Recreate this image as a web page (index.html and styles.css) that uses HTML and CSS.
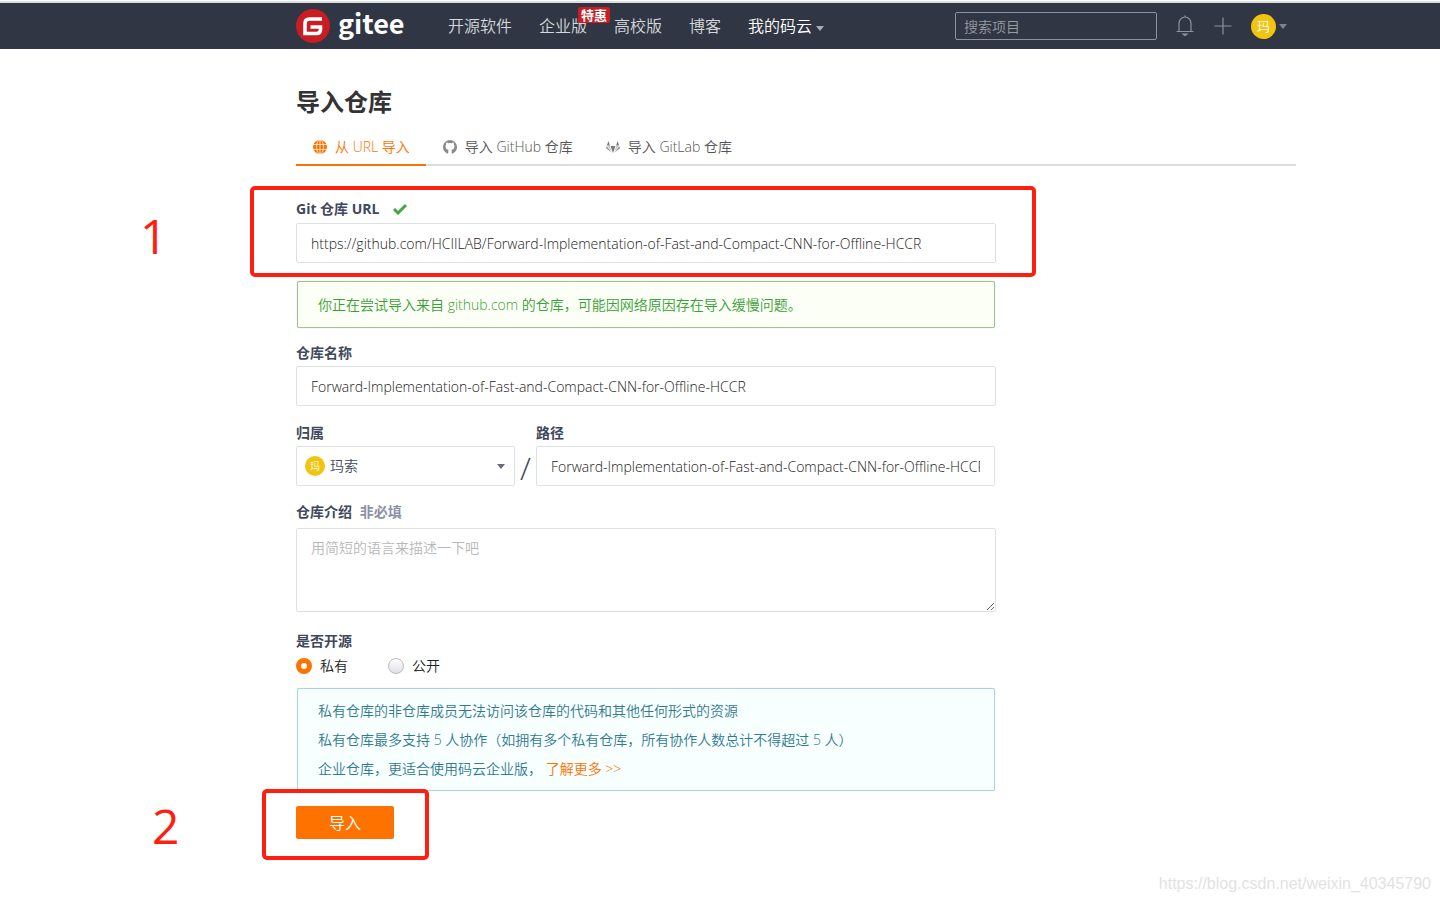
FILE: index.html
```html
<!DOCTYPE html>
<html lang="zh-CN">
<head>
    <meta charset="UTF-8">
    <meta name="viewport" content="width=device-width, initial-scale=1.0">
    <title>导入仓库 - 码云 Gitee</title>
    <link rel="stylesheet" href="styles.css">
</head>
<body>
    <header class="site-header">
        <a class="logo" href="#">
            <svg width="34" height="34" viewBox="0 0 34 34" aria-hidden="true">
                <circle cx="17" cy="17" r="17" fill="#c71d23"/>
                <path d="M26 10H13.500Q9 10 9 14.500V24.500H20.500Q24.500 24.500 24.500 20.500V18H14.500" fill="none" stroke="#fff" stroke-width="3.600"/>
            </svg>
            <span>gitee</span>
        </a>
        <nav class="main-nav">
            <a href="#">开源软件</a>
            <a href="#" class="has-badge">企业版<span class="badge">特惠</span></a>
            <a href="#">高校版</a>
            <a href="#">博客</a>
            <a href="#" class="active">我的码云<span class="caret"></span></a>
        </nav>
        <div class="header-tools">
            <input class="search" type="text" placeholder="搜索项目" aria-label="搜索项目">
            <button class="icon-button" type="button" aria-label="通知">
                <svg width="18" height="22" viewBox="0 0 18 22" fill="none" stroke="#8c92a4" stroke-width="1.2">
                    <path d="M.5 16.5h17M3 16.500V8.500a6 6.500 0 0 1 12 0v8M9 2V.5"/>
                    <path d="M7 19h4l-2 1.500z" fill="#8c92a4"/>
                </svg>
            </button>
            <button class="icon-button" type="button" aria-label="新建">
                <svg width="18" height="18" viewBox="0 0 18 18" stroke="#8c92a4" stroke-width="1.2">
                    <path d="M9 .5v17M.5 9h17"/>
                </svg>
            </button>
            <button class="user-menu" type="button">
                <span class="avatar">玛</span><span class="caret"></span>
            </button>
        </div>
    </header>

    <main class="page">
        <h1>导入仓库</h1>
        <nav class="tabs">
            <a href="#" class="active">
                <svg width="14" height="14" viewBox="0 0 14 14">
                    <circle cx="7" cy="7" r="7" fill="#fe7300"/>
                    <path d="M7 0v14M0 4.500h14M0 9.500h14" stroke="#fff" stroke-width=".7" fill="none"/>
                    <ellipse cx="7" cy="7" rx="3.500" ry="7" stroke="#fff" stroke-width=".7" fill="none"/>
                </svg>
                从 URL 导入
            </a>
            <a href="#">
                <svg width="14" height="14" viewBox="0 0 16 16" fill="#8a8a8a">
                    <path d="M8 0a8 8 0 0 0-2.500 15.600c.4.100.5-.2.500-.4v-2.700c0-.6.200-1 .5-1.300-1.800-.2-3.600-.9-3.600-4 0-.9.300-1.600.8-2.100-.1-.2-.4-1 .1-2.100 0 0 .7-.2 2.200.8a7.600 7.600 0 0 1 4 0c1.500-1 2.200-.8 2.200-.8.400 1.100.2 1.900.1 2.100.5.600.8 1.300.8 2.100 0 3.100-1.900 3.800-3.600 4 .3.300.5.800.5 1.500v2.500c0 .2.100.5.500.4A8 8 0 0 0 8 0z"/>
                </svg>
                导入 GitHub 仓库
            </a>
            <a href="#">
                <svg width="14" height="14" viewBox="0 0 14 14">
                    <path d="M2.400 1L.9 5.500h3zM11.600 1l-1.500 4.500h3z" fill="#777"/>
                    <path d="M4.600 6h4.800L7 13z" fill="#777"/>
                    <path d="M1.500 6h2l2.500 6zM12.500 6h-2L8 12z" fill="#c4c4c4"/>
                    <path d="M.8 6L0 8.300 5.500 12.500zM13.200 6l.8 2.300-5.500 4.200z" fill="#999"/>
                </svg>
                导入 GitLab 仓库
            </a>
        </nav>

        <form class="import-form">
            <div class="field marked">
                <label for="git-url">Git 仓库 URL
                    <svg class="check" width="14" height="12" viewBox="0 0 14 12">
                        <path d="M1 6l4 4L13 2" fill="none" stroke="#43a843" stroke-width="3"/>
                    </svg>
                </label>
                <input id="git-url" type="text" value="https://github.com/HCIILAB/Forward-Implementation-of-Fast-and-Compact-CNN-for-Offline-HCCR">
                <span class="step step-one">1</span>
                <span class="frame frame-url"></span>
            </div>

            <div class="message success">你正在尝试导入来自 github.com 的仓库，可能因网络原因存在导入缓慢问题。</div>

            <div class="field">
                <label for="name">仓库名称</label>
                <input id="name" type="text" value="Forward-Implementation-of-Fast-and-Compact-CNN-for-Offline-HCCR">
            </div>

            <div class="path-row">
                <div class="field">
                    <label for="owner">归属</label>
                    <div class="owner">
                        <select id="owner">
                            <option>玛索</option>
                        </select>
                        <span class="avatar">玛</span>
                        <span class="caret"></span>
                    </div>
                </div>
                <span class="slash">/</span>
                <div class="field">
                    <label for="path">路径</label>
                    <input id="path" type="text" value="Forward-Implementation-of-Fast-and-Compact-CNN-for-Offline-HCCR">
                </div>
            </div>

            <div class="field">
                <label for="description">仓库介绍 <span class="optional">非必填</span></label>
                <textarea id="description" placeholder="用简短的语言来描述一下吧"></textarea>
            </div>

            <fieldset>
                <legend>是否开源</legend>
                <div class="radios">
                    <label><input type="radio" name="public" checked>私有</label>
                    <label><input type="radio" name="public">公开</label>
                </div>
            </fieldset>

            <div class="message info">
                <p>私有仓库的非仓库成员无法访问该仓库的代码和其他任何形式的资源</p>
                <p>私有仓库最多支持 5 人协作（如拥有多个私有仓库，所有协作人数总计不得超过 5 人）</p>
                <p>企业仓库，更适合使用码云企业版， <a href="#">了解更多 &gt;&gt;</a></p>
            </div>

            <div class="actions marked">
                <button class="submit" type="submit">导入</button>
                <span class="step step-two">2</span>
                <span class="frame frame-submit"></span>
            </div>
        </form>
    </main>

    <div class="watermark">https://blog.csdn.net/weixin_40345790</div>
</body>
</html>
```
FILE: styles.css
```css
* {
    box-sizing: border-box;
    margin: 0;
    padding: 0;
}
body {
    font-family: "Open Sans", "Noto Sans CJK SC", sans-serif;
    font-size: 14px;
    font-weight: 350;
    line-height: 20px;
    color: #40485b;
    background-color: #fff;
    padding-top: 1px;
    position: relative;
    min-height: 100vh;
}
input, textarea, select, button {
    font: inherit;
    color: inherit;
}
a {
    text-decoration: none;
    color: inherit;
}
button {
    border: none;
    background: none;
    cursor: pointer;
}
.caret {
    display: inline-block;
    border: 4px solid transparent;
    border-top: 5px solid currentColor;
    border-bottom: none;
}
.avatar {
    display: flex;
    align-items: center;
    justify-content: center;
    border-radius: 50%;
    background-color: #f1c40f;
    color: #fff;
}

/* header */
.site-header {
    display: flex;
    align-items: center;
    height: 48px;
    padding: 0 153px 0 296px;
    border-top: 2px solid #d9dee0;
    background-color: #303643;
    color: #d5d7db;
    font-size: 16px;
}
.logo {
    display: flex;
    align-items: center;
    gap: 8px;
    width: 152px;
    color: #fff;
    font-family: "Noto Sans CJK SC", sans-serif;
    font-size: 27px;
    font-weight: bold;
}
.logo span {
    padding-bottom: 6px;
}
.main-nav {
    display: flex;
    gap: 27px;
    white-space: nowrap;
}
.main-nav .active {
    color: #fff;
}
.main-nav .caret {
    margin-left: 4px;
    vertical-align: 1px;
    color: #a9acb3;
}
.has-badge {
    position: relative;
}
.badge {
    position: absolute;
    left: 39px;
    top: -9px;
    padding: 0 3px;
    border-radius: 2px;
    background-color: #c71d23;
    color: #fff;
    font-size: 13px;
    font-weight: bold;
    line-height: 16px;
}
.header-tools {
    display: flex;
    align-items: center;
    gap: 18px;
    margin-left: auto;
}
.search {
    width: 202px;
    height: 28px;
    padding: 0 8px;
    border: 1px solid #8c92a4;
    border-radius: 2px;
    background-color: transparent;
    font-size: 14px;
}
.search::placeholder {
    color: #989ba2;
}
.icon-button {
    display: flex;
    width: 20px;
    justify-content: center;
}
.user-menu {
    display: flex;
    align-items: center;
    gap: 3px;
    color: #7d8394;
}
.user-menu .avatar {
    width: 25px;
    height: 25px;
    font-size: 13px;
}

/* page */
.page {
    padding: 37px 144px 40px 296px;
}
h1 {
    font-size: 24px;
    line-height: 32px;
    color: #333;
}
.tabs {
    display: flex;
    margin-top: 12px;
    border-bottom: 2px solid #dcdcdc;
}
.tabs a {
    display: flex;
    align-items: center;
    gap: 8px;
    height: 36px;
    padding: 0 16px 0 17px;
    margin-bottom: -2px;
    border-bottom: 2px solid transparent;
    color: #555;
}
.tabs .active {
    color: #fe7300;
    border-color: #fe7300;
}
.import-form {
    max-width: 700px;
    margin-top: 33px;
}
.field label, legend {
    display: block;
    margin-bottom: 3px;
    font-weight: bold;
}
.marked label {
    margin-bottom: 4px;
}
.check {
    margin-left: 10px;
    vertical-align: -1px;
}
.field input, .field select, .field textarea {
    display: block;
    width: 100%;
    height: 40px;
    padding: 0 14px;
    border: 1px solid #dce1e6;
    border-radius: 2px;
    background-color: #fff;
    color: #222;
}
.message {
    margin: 0 1px;
    padding: 7px 20px;
    border-radius: 2px;
    line-height: 29px;
}
.success {
    margin: 18px 1px 15px;
    padding: 8px 20px;
    border: 1px solid #a3c293;
    box-shadow: 0 0 1px #a3c293;
    background-color: #fcfff5;
    color: #38a038;
}
.path-row {
    display: flex;
    align-items: flex-end;
    margin: 17px 1px 16px 0;
}
.path-row .field {
    flex: 1;
}
.path-row .field:first-child {
    flex: 0 0 219px;
}
.slash {
    width: 21px;
    text-align: center;
    font-size: 32px;
    line-height: 36px;
}
.owner {
    position: relative;
}
.field .owner select {
    appearance: none;
    padding-left: 33px;
    color: #40485b;
}
.owner .avatar {
    position: absolute;
    left: 9px;
    top: 10px;
    width: 20px;
    height: 20px;
    font-size: 10px;
    pointer-events: none;
}
.owner .caret {
    position: absolute;
    right: 10px;
    top: 18px;
    color: #666b7a;
    pointer-events: none;
}
.optional {
    margin-left: 4px;
    color: #8c92a4;
}
.field textarea {
    height: 84px;
    margin-top: 6px;
    padding: 9px 14px;
    resize: vertical;
}
.field textarea::placeholder {
    color: #b8b8b8;
}
fieldset {
    margin: 19px 0 12px;
    border: none;
}
legend {
    margin-bottom: 5px;
}
.radios {
    display: flex;
    gap: 40px;
    color: #222;
}
.radios label {
    display: flex;
    align-items: center;
    gap: 8px;
}
.radios input {
    appearance: none;
    width: 16px;
    height: 16px;
    border: 1px solid #bbb;
    border-radius: 50%;
    background: linear-gradient(#fff, #dfe1e6);
}
.radios input:checked {
    border: 5px solid #fe7300;
    background: #fff;
}
.info {
    border: 1px solid #a9d5de;
    box-shadow: 0 0 1px #a9d5de;
    background-color: #f8ffff;
    color: #327a90;
}
.info a {
    color: #fe7300;
}
.actions {
    display: flex;
    margin-top: 15px;
}
.submit {
    width: 98px;
    height: 33px;
    border-radius: 2px;
    background-color: #fe7300;
    color: #fff;
    font-size: 16px;
}

/* red marks over the form */
.marked {
    position: relative;
}
.step {
    position: absolute;
    color: #ff1e10;
    font-size: 48px;
    font-weight: 400;
    line-height: 48px;
}
.step-one {
    left: -156px;
    top: 13px;
}
.step-two {
    left: -144px;
    top: -4px;
}
.frame {
    position: absolute;
    border: 4px solid #ff1e10;
    border-radius: 5px;
    pointer-events: none;
}
.frame-url {
    inset: -13px -40px -14px -46px;
}
.frame-submit {
    left: -34px;
    top: -17px;
    width: 167px;
    height: 71px;
}
.watermark {
    position: absolute;
    right: 9px;
    bottom: 8px;
    color: #e2e2e2;
    font-family: "Liberation Sans", sans-serif;
    font-size: 16px;
    font-weight: 400;
}
```
